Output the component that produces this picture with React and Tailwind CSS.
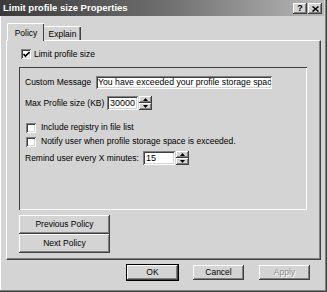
import React from "react";

const raised =
  "bg-[#d4d4d4] shadow-[inset_-1px_-1px_#404040,inset_1px_1px_#ffffff,inset_-2px_-2px_#808080]";
const sunken =
  "bg-white shadow-[inset_1px_1px_#808080,inset_-1px_-1px_#ffffff,inset_2px_2px_#404040,inset_-2px_-2px_#d4d4d4]";

const CheckBox = ({ checked }) => (
  <div className={`w-[10px] h-[10px] shrink-0 flex items-center justify-center ${sunken}`}>
    {checked && (
      <svg width="7" height="7" viewBox="0 0 7 7">
        <path d="M0.5 3 L2.5 5 L6.5 1" stroke="#000" strokeWidth="1.6" fill="none" />
      </svg>
    )}
  </div>
);

const Spinner = () => (
  <div className="flex flex-col w-[13px] h-full ml-[1px]">
    {["up", "down"].map((d) => (
      <div key={d} className={`flex-1 flex items-center justify-center ${raised}`}>
        <svg width="5" height="3" viewBox="0 0 5 3">
          {d === "up" ? <path d="M2.5 0 L5 3 L0 3 Z" fill="#000" /> : <path d="M0 0 L5 0 L2.5 3 Z" fill="#000" />}
        </svg>
      </div>
    ))}
  </div>
);

const SpinBox = ({ value, width }) => (
  <div className="flex h-[14px]">
    <div className={`${sunken} h-full flex items-center pl-[3px] overflow-hidden`} style={{ width }}>
      <span className="text-[9px] leading-none">{value}</span>
    </div>
    <Spinner />
  </div>
);

const Button = ({ children, def, disabled, className = "" }) => (
  <div
    className={`flex items-center justify-center ${raised} ${
      def ? "outline outline-1 outline-[#000]" : ""
    } ${className}`}
  >
    <span
      className={
        disabled ? "text-[#8c8c8c] [text-shadow:1px_1px_#ffffff]" : "text-black"
      }
    >
      {children}
    </span>
  </div>
);

export default function App() {
  return (
    <div className="w-[327px] h-[292px] bg-[#d4d4d4] flex flex-col font-['Liberation_Sans',Arial,sans-serif] text-[8.5px] text-black shadow-[inset_-1px_-1px_#404040,inset_-2px_-2px_#808080,inset_1px_0_#ffffff] overflow-hidden">
      {/* title bar */}
      <div className="h-[16px] mr-[3px] flex items-center pl-[3px] pr-[2px] bg-linear-to-r from-[#3a3a3a] via-[#6e6e6e] to-[#b8b8b8]">
        <span className="text-white font-bold text-[9.5px]">Limit profile size Properties</span>
        <div className="ml-auto flex gap-[1px] mt-[1px]">
          <div className={`w-[14px] h-[11px] flex items-center justify-center ${raised}`}>
            <span className="font-bold text-[9px] leading-none">?</span>
          </div>
          <div className={`w-[14px] h-[11px] flex items-center justify-center ${raised}`}>
            <svg width="7" height="6" viewBox="0 0 7 6">
              <path d="M0.5 0.5 L6.5 5.5 M6.5 0.5 L0.5 5.5" stroke="#000" strokeWidth="1.5" />
            </svg>
          </div>
        </div>
      </div>

      {/* tabs */}
      <div className="h-[17px] mt-[7px] pl-[7px] flex items-end">
        <div className="relative z-10 -mb-[1px] w-[37px] h-[18px] bg-[#d4d4d4] border-l border-t border-white rounded-tl-[2px] shadow-[inset_-1px_0_#404040] flex items-start justify-center pt-[3px]">
          <span>Policy</span>
        </div>
        <div className="w-[37px] h-[14px] border-t border-white shadow-[inset_-1px_0_#404040,inset_-2px_0_#808080] flex items-start justify-center pt-[1px]">
          <span>Explain</span>
        </div>
      </div>

      {/* panel */}
      <div className="ml-[6px] w-[315px] h-[220px] border-l border-t border-white shadow-[inset_-1px_-1px_#808080] border-r border-b border-r-[#404040] border-b-[#404040] flex flex-col pl-[12px]">
        <div className="flex items-center gap-[2px] mt-[8px] pl-[2px] h-[10px]">
          <CheckBox checked />
          <span className="ml-[1px]">Limit profile size</span>
        </div>

        {/* group */}
        <div className="mt-[8px] w-[288px] h-[143px] shadow-[inset_1px_1px_#404040,inset_-1px_-1px_#ffffff] flex flex-col pl-[6px]">
          <div className="flex items-center mt-[9px] h-[13px]">
            <span className="w-[71px]">Custom Message</span>
            <div className={`${sunken} w-[176px] h-[13px] flex items-center pl-[2px] overflow-hidden whitespace-nowrap`}>
              <span className="text-[8.7px] leading-none">You have exceeded your profile storage spac</span>
            </div>
          </div>
          <div className="flex items-center mt-[7px]">
            <span className="w-[82px]">Max Profile size (KB)</span>
            <SpinBox value="30000" width={31} />
          </div>
          <div className="flex items-center mt-[11px] h-[13px] pl-[1px] gap-[5px]">
            <CheckBox />
            <span>Include registry in file list</span>
          </div>
          <div className="flex items-center mt-[1px] h-[13px] pl-[1px] gap-[5px]">
            <CheckBox />
            <span>Notify user when profile storage space is exceeded.</span>
          </div>
          <div className="flex items-center mt-[3px]">
            <span className="w-[118px]">Remind user every X minutes:</span>
            <SpinBox value="15" width={32} />
          </div>
        </div>

        <div className="mt-[5px] flex flex-col w-[91px]">
          <Button className="h-[19px]">Previous Policy</Button>
          <Button className="h-[19px]">Next Policy</Button>
        </div>
      </div>

      {/* bottom buttons */}
      <div className="mt-[5px] h-[15px] flex pl-[127px] gap-[15px]">
        <Button def className="w-[51px] h-[15px]">OK</Button>
        <Button className="w-[51px] h-[15px]">Cancel</Button>
        <Button disabled className="w-[51px] h-[15px]">Apply</Button>
      </div>
    </div>
  );
}
